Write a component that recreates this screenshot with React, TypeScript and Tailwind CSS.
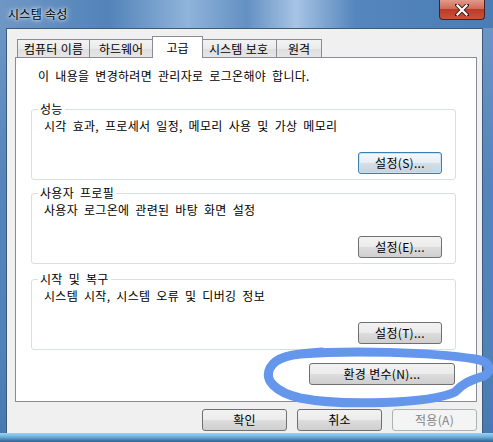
import React from "react";

const btn =
    "h-[22px] flex items-center justify-center rounded-[3px] border text-[12px] leading-none";
const normalBtn =
    "border-[#707070] bg-[linear-gradient(#f2f2f2_0%,#ebebeb_50%,#dddddd_50%,#cfcfcf_100%)] text-black";
const defaultBtn =
    "border-[#3c7fb1] bg-[linear-gradient(#f4f8fb_0%,#e6eef4_50%,#d4dfe8_50%,#c6d3de_100%)] shadow-[inset_0_0_0_1px_#c6e2f4] text-black";
const disabledBtn = "border-[#adb2b5] bg-[#f4f4f4] text-[#838383]";

const tabs = [
    { label: "컴퓨터 이름", w: "w-[73px]" },
    { label: "하드웨어", w: "w-[64px]" },
    { label: "고급", w: "w-[51px]", active: true },
    { label: "시스템 보호", w: "w-[77px]" },
    { label: "원격", w: "w-[46px]" },
];

function Group({ title, text, button, focus }: { title: string; text: string; button: string; focus?: boolean }) {
    return (
        <fieldset className="ml-[15px] w-[425px] rounded-[3px] border border-[#d5dfe5] pb-[5px]">
            <legend className="ml-[6px] px-[2px] leading-[14px]">{title}</legend>
            <div className="mt-[3px] pl-[12px] leading-[14px]">{text}</div>
            <div className="mt-[19px] flex justify-end pr-[13px]">
                <button className={`${btn} w-[84px] ${focus ? defaultBtn : normalBtn}`}>{button}</button>
            </div>
        </fieldset>
    );
}

export default function App() {
    return (
        <div
            className="relative w-[493px] h-[442px] overflow-hidden bg-[linear-gradient(180deg,#6f98c6_0%,#5585ba_40%,#4f82b8_80%,#4679b0_100%)] text-[12px] text-black [word-spacing:3px] tracking-[0.3px]"
            style={{ fontFamily: '"Noto Sans CJK KR", "Noto Sans", sans-serif' }}
        >
            {/* title bar */}
            <div className="h-[28px] flex items-start justify-between pr-[8px] bg-[linear-gradient(90deg,#6f97c5_0%,#5283b9_22%,#90b4da_38%,#6390c3_50%,#a7c4e3_60%,#5586bd_72%,#4a7db6_100%)]">
                <span className="self-center pl-[8px] leading-none [word-spacing:0px] [text-shadow:0_0_6px_#ffffff,0_0_3px_#ffffff]">시스템 속성</span>
                <div className="w-[46px] h-[20px] rounded-b-[4px] border border-t-0 border-[#4d2020] bg-[linear-gradient(#e29a8a_0%,#cf6d5a_45%,#bd3a26_50%,#c8533a_100%)] flex items-center justify-center">
                    <svg width="14" height="12" viewBox="0 0 14 12">
                        <path d="M2 1 L12 11 M12 1 L2 11" stroke="#3a1a1a" strokeWidth="4" strokeLinecap="square" />
                        <path d="M2.5 1.5 L11.5 10.5 M11.5 1.5 L2.5 10.5" stroke="#ffffff" strokeWidth="2.2" strokeLinecap="square" />
                    </svg>
                </div>
            </div>

            {/* client area */}
            <div className="ml-[6px] w-[477px] h-[405px] border-x border-t border-[#3c5a7c] bg-[#f0f0f0] pl-[8px] pt-[7px]">
                <div className="ml-[2px] flex items-end h-[21px] [word-spacing:1px] tracking-normal">
                    {tabs.map((t, i) => (
                        <div
                            key={t.label}
                            className={`${t.w} ${i > 0 ? "-ml-px" : ""} flex items-center justify-center border border-b-0 border-[#898c95] leading-none ${
                                t.active
                                    ? "relative z-10 h-[22px] -mb-px -mx-[2px] bg-white"
                                    : "h-[18px] bg-[linear-gradient(#f3f3f3_0%,#ebebeb_50%,#dedede_50%,#e6e6e6_100%)]"
                            }`}
                        >
                            {t.label}
                        </div>
                    ))}
                </div>

                <div className="w-[462px] h-[345px] border border-[#898c95] bg-white pt-[11px] flex flex-col">
                    <div className="pl-[22px] leading-[14px]">이 내용을 변경하려면 관리자로 로그온해야 합니다.</div>
                    <div className="mt-[19px]">
                        <Group title="성능" text="시각 효과, 프로세서 일정, 메모리 사용 및 가상 메모리" button="설정(S)..." focus />
                    </div>
                    <div className="mt-[6px]">
                        <Group title="사용자 프로필" text="사용자 로그온에 관련된 바탕 화면 설정" button="설정(E)..." />
                    </div>
                    <div className="mt-[8px]">
                        <Group title="시작 및 복구" text="시스템 시작, 시스템 오류 및 디버깅 정보" button="설정(T)..." />
                    </div>
                    <div className="mt-[13px] flex justify-end pr-[21px]">
                        <button className={`${btn} w-[146px] ${normalBtn}`}>환경 변수(N)...</button>
                    </div>
                </div>

                <div className="mt-[7px] w-[462px] flex justify-end gap-[10px]">
                    <button className={`${btn} w-[85px] ${normalBtn}`}>확인</button>
                    <button className={`${btn} w-[85px] ${normalBtn}`}>취소</button>
                    <button className={`${btn} w-[85px] ${disabledBtn}`}>적용(A)</button>
                </div>
            </div>

            {/* bottom frame */}
            <div className="h-[9px] bg-[linear-gradient(180deg,#9fd2f0_0%,#6fb4e0_40%,#2f5f8f_100%)]" />

            {/* hand-drawn highlight */}
            <svg className="absolute inset-0 pointer-events-none" width="493" height="442" viewBox="0 0 493 442">
                <path
                    d="M300 354 C350 350 430 352 475 359 C490 361 493 371 484 376 C470 380 462 384 455 392 C430 404 340 406 300 398 C275 392 264 380 270 368 C276 357 290 354 322 352"
                    fill="none"
                    stroke="#6496ec"
                    strokeWidth="9"
                    strokeLinecap="round"
                    strokeLinejoin="round"
                />
            </svg>
        </div>
    );
}
